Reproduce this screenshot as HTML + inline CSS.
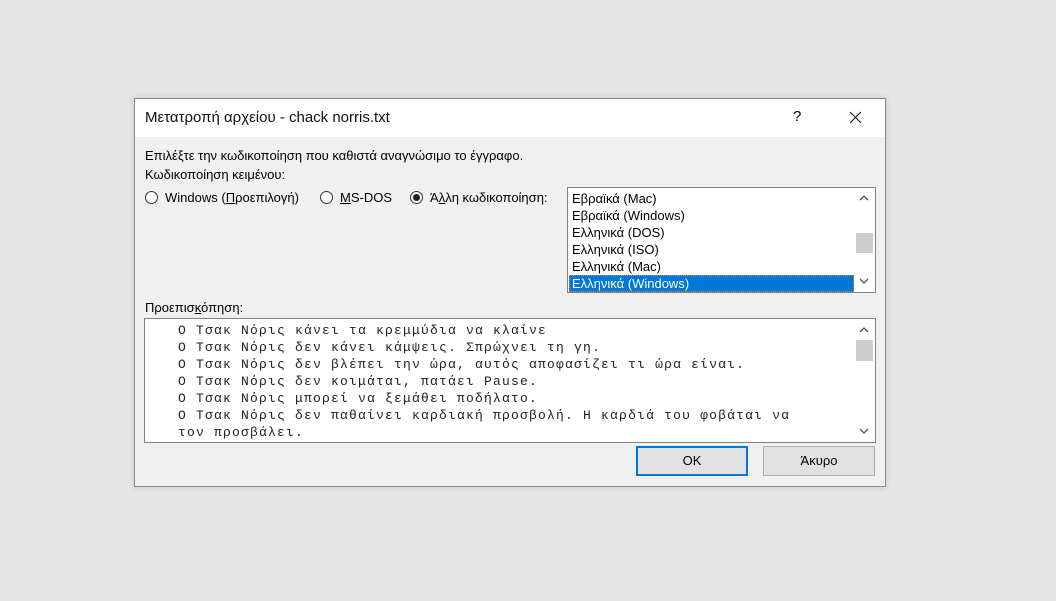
<!DOCTYPE html>
<html><head><meta charset="utf-8"><style>
body{margin:0;width:1056px;height:601px;background:#e6e6e6;font-family:"Liberation Sans","Noto Sans CJK SC",sans-serif;font-size:13px;color:#000;position:relative;overflow:hidden}
.dlg{position:absolute;left:134px;top:98px;width:750px;height:387px;border:1px solid #8a8a8a;background:#f0f0f0;box-shadow:0 0 6px rgba(0,0,0,.15)}
.tb{position:absolute;left:0;top:0;right:0;height:38px;background:#fff}
.abs{position:absolute;white-space:nowrap}
.radio{position:absolute;width:13px;height:13px;border:1px solid #333;border-radius:50%;background:#fff;box-sizing:border-box}
.radio.on::after{content:"";position:absolute;left:2px;top:2px;width:7px;height:7px;border-radius:50%;background:#222}
.list{position:absolute;left:432px;top:88px;width:309px;height:106px;border:1px solid #828282;background:#fff;box-sizing:border-box}
.item{position:absolute;left:1px;width:285px;height:17px;line-height:17px;padding-left:3px;box-sizing:border-box}
.sb{position:absolute;right:0;top:0;bottom:0;width:21px;background:#fff}
.thumb{position:absolute;left:2px;width:17px;background:#cdcdcd}
.arr{position:absolute;left:5px}
.prev{position:absolute;left:9px;top:219px;width:732px;height:125px;border:1px solid #828282;background:#fff;box-sizing:border-box}
.mono{position:absolute;left:33px;top:3px;font-family:"Liberation Mono","DejaVu Sans Mono",monospace;font-size:13px;letter-spacing:1.2px;line-height:17px;color:#222;white-space:pre}
.btn{position:absolute;top:347px;width:112px;height:30px;box-sizing:border-box;background:#e1e1e1;border:1px solid #adadad;text-align:center;line-height:28px;font-size:13px}
</style></head><body>
<div class="dlg">
 <div class="tb">
  <div class="abs" style="left:10px;top:10px;font-size:15px;color:#111">Μετατροπή αρχείου - chack norris.txt</div>
  <div class="abs" style="left:658px;top:9px;font-size:15px">?</div>
  <svg class="abs" style="left:714px;top:12px" width="13" height="13"><path d="M1 1L12 12M12 1L1 12" stroke="#222" stroke-width="1.2"/></svg>
 </div>
 <div class="abs" style="left:10px;top:49px">Επιλέξτε την κωδικοποίηση που καθιστά αναγνώσιμο το έγγραφο.</div>
 <div class="abs" style="left:10px;top:68px">Κωδικοποίηση κειμένου:</div>
 <div class="radio" style="left:10px;top:92px"></div>
 <div class="abs" style="left:30px;top:91px">Windows (<u>Π</u>ροεπιλογή)</div>
 <div class="radio" style="left:185px;top:92px"></div>
 <div class="abs" style="left:205px;top:91px"><u>M</u>S-DOS</div>
 <div class="radio on" style="left:275px;top:92px"></div>
 <div class="abs" style="left:295px;top:91px">Ά<u>λ</u>λη κωδικοποίηση:</div>
 <div class="list">
  <div class="item" style="top:2px">Εβραϊκά (Mac)</div>
  <div class="item" style="top:19px">Εβραϊκά (Windows)</div>
  <div class="item" style="top:36px">Ελληνικά (DOS)</div>
  <div class="item" style="top:53px">Ελληνικά (ISO)</div>
  <div class="item" style="top:70px">Ελληνικά (Mac)</div>
  <div class="item" style="top:87px;background:#0078d7;color:#fff;outline:1px dotted #e08a2a;outline-offset:-1px">Ελληνικά (Windows)</div>
  <div class="sb">
   <svg class="arr" style="top:7px" width="10" height="6"><path d="M1 5L5 1L9 5" fill="none" stroke="#555" stroke-width="1.3"/></svg>
   <div class="thumb" style="top:45px;height:20px"></div>
   <svg class="arr" style="top:90px" width="10" height="6"><path d="M1 1L5 5L9 1" fill="none" stroke="#555" stroke-width="1.3"/></svg>
  </div>
 </div>
 <div class="abs" style="left:10px;top:201px">Προεπισ<u>κ</u>όπηση:</div>
 <div class="prev">
  <div class="mono">Ο Τσακ Νόρις κάνει τα κρεμμύδια να κλαίνε
Ο Τσακ Νόρις δεν κάνει κάμψεις. Σπρώχνει τη γη.
Ο Τσακ Νόρις δεν βλέπει την ώρα, αυτός αποφασίζει τι ώρα είναι.
Ο Τσακ Νόρις δεν κοιμάται, πατάει Pause.
Ο Τσακ Νόρις μπορεί να ξεμάθει ποδήλατο.
Ο Τσακ Νόρις δεν παθαίνει καρδιακή προσβολή. Η καρδιά του φοβάται να
τον προσβάλει.</div>
  <div class="sb">
   <svg class="arr" style="top:8px" width="10" height="6"><path d="M1 5L5 1L9 5" fill="none" stroke="#555" stroke-width="1.3"/></svg>
   <div class="thumb" style="top:21px;height:21px"></div>
   <svg class="arr" style="top:109px" width="10" height="6"><path d="M1 1L5 5L9 1" fill="none" stroke="#555" stroke-width="1.3"/></svg>
  </div>
 </div>
 <div class="btn" style="left:501px;border:2px solid #0078d7;line-height:26px">OK</div>
 <div class="btn" style="left:628px">Άκυρο</div>
</div>
</body></html>
